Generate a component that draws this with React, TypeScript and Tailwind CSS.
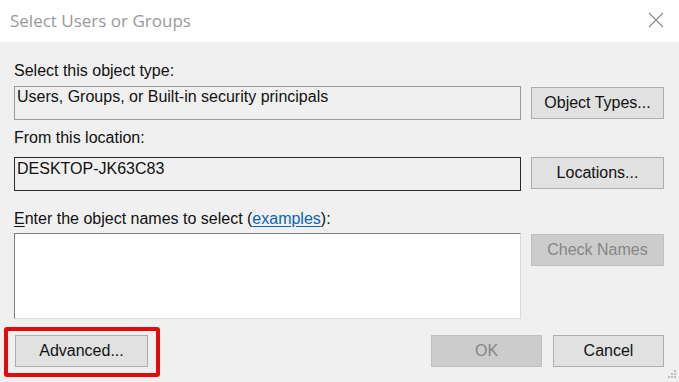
import React from "react";

const btn =
  "flex h-8 shrink-0 items-center justify-center border border-[#adadad] bg-[#e1e1e1] text-[16px] text-[#111]";
const btnDisabled =
  "flex h-8 shrink-0 items-center justify-center border border-[#bfbfbf] bg-[#cccccc] text-[16px] text-[#868686]";

function ResizeGrip() {
  const dots = [
    [9, 0],
    [6, 3],
    [9, 3],
    [3, 6],
    [6, 6],
    [9, 6],
  ];
  return (
    <svg width="12" height="9" viewBox="0 0 12 9" className="absolute bottom-[3px] right-[2px]">
      {dots.map(([x, y]) => (
        <rect key={`${x}-${y}`} x={x} y={y} width="2" height="2" fill="#bdbdbd" />
      ))}
    </svg>
  );
}

export default function App() {
  return (
    <div
      className="flex h-[382px] w-[679px] flex-col overflow-hidden bg-[#f0f0f0] text-[#111]"
      style={{ fontFamily: '"Liberation Sans", Arial, sans-serif' }}
    >
      {/* Title bar */}
      <div className="flex h-[42px] shrink-0 items-center justify-between bg-white pl-[10px] pr-[15px]">
        <span
          className="text-[17px] text-[#999999]"
          style={{ fontFamily: '"Open Sans", "Noto Sans", sans-serif' }}
        >
          Select Users or Groups
        </span>
        <svg width="16" height="16" viewBox="0 0 16 16" className="mt-[-3px]">
          <path d="M1 1L15 15M15 1L1 15" stroke="#8a8a8a" strokeWidth="1.1" fill="none" />
        </svg>
      </div>

      {/* Body */}
      <div className="relative flex flex-1 flex-col pl-[14px] pr-[15px] pt-[20px]">
        <div className="h-[18px] text-[16px] leading-[18px]">Select this object type:</div>
        <div className="mt-[6px] flex items-center gap-[10px]">
          <div className="h-[34px] w-[507px] border border-[#9a9a9a] bg-[#f0f0f0] pl-[2px] pt-[1px] text-[16px] leading-[18px]">
            Users, Groups, or Built-in security principals
          </div>
          <button className={`${btn} w-[133px]`}>Object Types...</button>
        </div>

        <div className="mt-[9px] h-[18px] text-[16px] leading-[18px]">From this location:</div>
        <div className="mt-[10px] flex items-start gap-[10px]">
          <div className="h-[34px] w-[507px] border border-[#2a2a2a] bg-[#f0f0f0] pl-[2px] pt-[2px] text-[16px] leading-[18px]">
            DESKTOP-JK63C83
          </div>
          <button className={`${btn} w-[133px]`}>Locations...</button>
        </div>

        <div className="mt-[19px] h-[18px] text-[16px] leading-[18px]">
          <span className="underline underline-offset-2">E</span>nter the object names to select (
          <span className="text-[#0b63b8] underline underline-offset-2">examples</span>):
        </div>
        <div className="mt-[5px] flex items-start gap-[10px]">
          <div className="h-[86px] w-[507px] border border-b-[#dadada] border-l-[#7f7f7f] border-r-[#dadada] border-t-[#7f7f7f] bg-white" />
          <button className={`${btnDisabled} mt-px w-[133px]`} disabled>
            Check Names
          </button>
        </div>

        <div className="mt-[16px] flex items-center">
          <div className="relative ml-px">
            <button className={`${btn} w-[133px]`}>Advanced...</button>
            <div className="pointer-events-none absolute bottom-[-10px] left-[-11px] right-[-12px] top-[-8px] rounded-[3px] border-[4px] border-[#e30a0a]" />
          </div>
          <div className="ml-auto flex gap-[11px]">
            <button className={`${btnDisabled} w-[111px]`} disabled>
              OK
            </button>
            <button className={`${btn} w-[111px]`}>Cancel</button>
          </div>
        </div>

        <ResizeGrip />
      </div>
    </div>
  );
}
